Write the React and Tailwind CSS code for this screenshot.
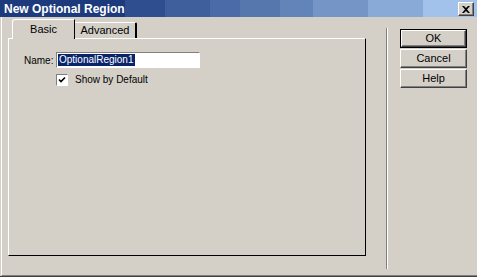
import React from 'react'

const bands = ['#1c3a7c', '#1c3a7c', '#1c3a7c', '#2e4e90', '#3e5f9c', '#4b6ba8', '#5676ae', '#6384b8', '#7595c6', '#89a9d6', '#a2c2ec']
const bandWidths = [42, 42, 41, 40, 45, 30, 40, 33, 55, 55, 54]

function Button({ label, isDefault }) {
  if (isDefault) {
    return (
      <div className="h-[19px] w-[67px] border border-black">
        <div className="flex h-full w-full items-center justify-center border-t border-l border-white border-r border-b border-r-[#404040] border-b-[#404040] shadow-[inset_-1px_-1px_0_#808080] text-[11px] text-black">
          {label}
        </div>
      </div>
    )
  }
  return (
    <div className="flex h-[19px] w-[67px] items-center justify-center border-t border-l border-white border-r border-b border-r-[#404040] border-b-[#404040] shadow-[inset_-1px_-1px_0_#808080] text-[11px] text-black">
      {label}
    </div>
  )
}

export default function App() {
  return (
    <div
      className="flex h-[277px] w-[477px] flex-col overflow-hidden bg-[#d4d0c8] border-b border-b-[#404040]"
      style={{ fontFamily: '"Liberation Sans", Arial, sans-serif' }}
    >
      {/* title bar */}
      <div className="relative h-[17px] w-full shrink-0">
        <div className="flex h-full w-full">
          {bands.map((c, i) => (
            <div key={i} className="h-full" style={{ backgroundColor: c, width: bandWidths[i] }} />
          ))}
        </div>
        <div className="absolute left-[4px] top-0 flex h-full items-center text-[12px] font-bold text-white">
          New Optional Region
        </div>
        <div className="absolute right-[3px] top-[2px] flex h-[14px] w-[16px] items-center justify-center border-t border-l border-white border-r border-b border-r-[#404040] border-b-[#404040] bg-[#d4d0c8] shadow-[inset_-1px_-1px_0_#808080]">
          <svg width="8" height="7" viewBox="0 0 8 7">
            <path d="M0 0h2l2 2 2-2h2L5 3.5 8 7H6L4 5 2 7H0l3-3.5z" fill="black" />
          </svg>
        </div>
      </div>

      {/* body */}
      <div className="flex flex-1 border-l border-l-white border-b border-b-[#808080] ml-px">
        <div className="flex flex-col pl-[6px] pt-[2px]">
          {/* tabs */}
          <div className="flex items-end pl-[4px]">
            <div className="relative z-10 -mb-px flex h-[20px] w-[63px] items-center justify-center rounded-tl-[3px] border-t border-l border-white border-r border-r-black bg-[#d4d0c8] pb-[1px] text-[11px] text-black">
              Basic
            </div>
            <div className="flex h-[16px] w-[62px] items-center justify-center rounded-tr-[2px] border-t border-white border-r-2 border-r-black text-[11px] text-black">
              Advanced
            </div>
          </div>
          {/* panel */}
          <div className="h-[218px] w-[358px] border-t border-l border-white border-r border-b border-r-black border-b-black pl-[15px] pt-[13px]">
            <div className="flex items-center">
              <span className="w-[32px] text-[10px] text-black">Name:</span>
              <div className="flex h-[16px] w-[144px] items-center border-t border-l border-[#808080] border-r border-b border-r-white border-b-white bg-white pl-px">
                <span className="bg-[#0a246a] px-px text-[10px] leading-[12px] text-white">OptionalRegion1</span>
              </div>
            </div>
            <div className="mt-[4px] flex items-center pl-[32px]">
              <div className="flex h-[12px] w-[12px] items-center justify-center border-t border-l border-[#808080] border-r border-b border-r-white border-b-white bg-white">
                <svg width="8" height="8" viewBox="0 0 8 8">
                  <path d="M1 3.5 3 5.5 7 1.5" stroke="black" strokeWidth="1.6" fill="none" />
                </svg>
              </div>
              <span className="ml-[7px] text-[10px] text-black">Show by Default</span>
            </div>
          </div>
        </div>

        {/* separator and buttons */}
        <div className="ml-[20px] mt-[11px] mb-[6px] w-px bg-[#808080]" />
        <div className="mt-[11px] mb-[6px] w-px bg-white" />
        <div className="ml-[12px] mt-[12px] flex flex-col gap-[1px]">
          <Button label="OK" isDefault />
          <Button label="Cancel" />
          <Button label="Help" />
        </div>
      </div>
    </div>
  )
}
